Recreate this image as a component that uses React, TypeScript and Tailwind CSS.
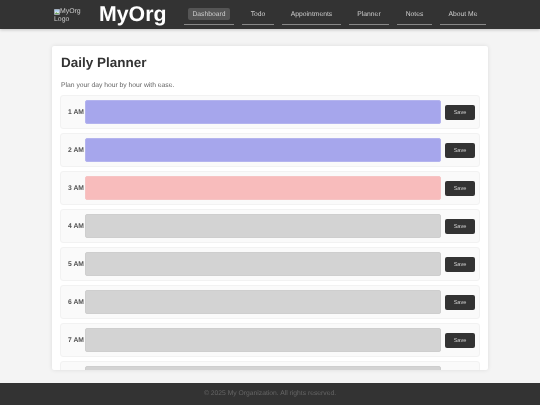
const NAV = [
  { label: 'Dashboard', w: 'w-[50px]', active: true },
  { label: 'Todo', w: 'w-[32px]' },
  { label: 'Appointments', w: 'w-[59px]' },
  { label: 'Planner', w: 'w-[40px]' },
  { label: 'Notes', w: 'w-[35px]' },
  { label: 'About Me', w: 'w-[46px]' },
]

const HOURS = [
  { hour: '1 AM', color: 'bg-[#a6a6ec]', border: 'border-[#b4b4ee]' },
  { hour: '2 AM', color: 'bg-[#a6a6ec]', border: 'border-[#b4b4ee]' },
  { hour: '3 AM', color: 'bg-[#f8bcbc]', border: 'border-[#f6c4c4]' },
  { hour: '4 AM', color: 'bg-[#d3d3d3]', border: 'border-[#cecece]' },
  { hour: '5 AM', color: 'bg-[#d3d3d3]', border: 'border-[#cecece]' },
  { hour: '6 AM', color: 'bg-[#d3d3d3]', border: 'border-[#cecece]' },
  { hour: '7 AM', color: 'bg-[#d3d3d3]', border: 'border-[#cecece]' },
  { hour: '8 AM', color: 'bg-[#d3d3d3]', border: 'border-[#cecece]' },
]

export default function App() {
  return (
    <div className="h-[405px] w-[540px] flex flex-col overflow-hidden bg-[#f4f4f4] text-[#333] font-['Liberation_Sans',Arial,sans-serif] [text-rendering:geometricPrecision] blur-[0.35px]">
      {/* Header */}
      <header className="h-[29px] flex-shrink-0 bg-[#333] flex items-center pl-[54px] shadow-[0_1px_3px_rgba(0,0,0,0.2)]">
        <div className="w-[45px] flex-shrink-0 mt-[2px] text-[6.9px] leading-[8px] text-[#ccc]">
          <svg className="inline-block align-top mt-[1px]" width="6" height="6" viewBox="0 0 16 16">
            <rect x="1" y="1" width="14" height="14" fill="#e8eef6" stroke="#9aa5b1" />
            <path d="M2 13l4-5 3 3 2-2 3 4z" fill="#6ba35c" />
            <path d="M2 2h12v5H2z" fill="#a9c8ee" />
          </svg>
          MyOrg
          <br />
          Logo
        </div>
        <h1 className="w-[85px] flex-shrink-0 text-[21.3px] font-bold text-white leading-none">MyOrg</h1>
        <nav className="flex gap-[8px]">
          {NAV.map((n) => (
            <div
              key={n.label}
              className={`${n.w} h-[17px] pb-[3px] flex items-center justify-center border-b border-[#888] mt-[3px]`}
            >
              <span className={`inline-block h-[12px] leading-[14px] text-[6.75px] text-[#ccc] ${n.active ? 'bg-[#555] px-[4px] rounded-[2px]' : ''}`}>
                {n.label}
              </span>
            </div>
          ))}
        </nav>
      </header>

      {/* Main */}
      <main className="flex-1 min-h-0 px-[52px] pt-[17px] pb-[13px]">
        <section className="h-full bg-white rounded-[2px] shadow-[0_0_4px_rgba(0,0,0,0.1)] px-[8px] pt-[9px] overflow-hidden">
          <h2 className="text-[13.5px] font-bold text-[#333] leading-[16px] pl-[1px]">Daily Planner</h2>
          <p className="text-[6.75px] text-[#666] leading-[8px] mt-[11px] mb-[5px] pl-[1px]">Plan your day hour by hour with ease.</p>
          <div className="flex flex-col gap-[4px]">
            {HOURS.map((h) => (
              <div
                key={h.hour}
                className="h-[34px] flex-shrink-0 flex items-center bg-[#fafafa] border border-[#f2f2f2] rounded-[3px] pl-[7px] pr-[4px]"
              >
                <span className="w-[17px] flex-shrink-0 mt-[2px] text-[6.75px] font-bold text-[#555] whitespace-nowrap">{h.hour}</span>
                <div className={`flex-1 h-[24px] rounded-[2px] border ${h.color} ${h.border}`} />
                <button className="ml-[4px] w-[30px] h-[15px] flex-shrink-0 bg-[#333] text-[#ccc] text-[5.6px] rounded-[2px]">
                  Save
                </button>
              </div>
            ))}
          </div>
        </section>
      </main>

      {/* Footer */}
      <footer className="h-[22px] flex-shrink-0 bg-[#333] flex items-center justify-center text-[6.75px] text-[#666]">
        © 2025 My Organization. All rights reserved.
      </footer>
    </div>
  )
}
